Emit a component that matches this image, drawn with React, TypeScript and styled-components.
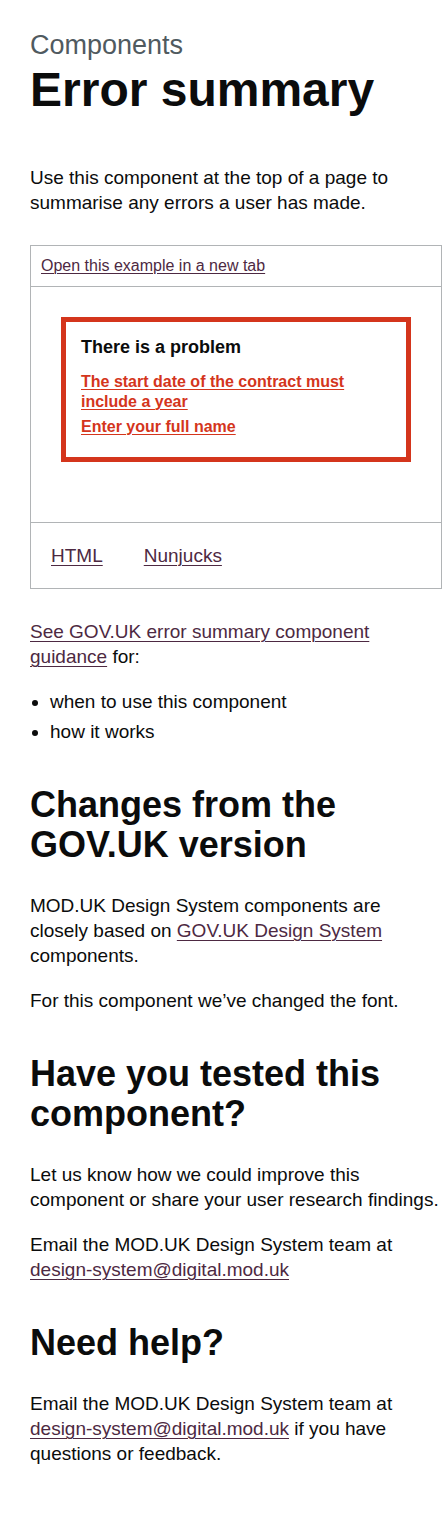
import React from "react";
import styled, { createGlobalStyle } from "styled-components";

const GlobalStyle = createGlobalStyle`
  html, body {
    margin: 0;
    padding: 0;
    background: #ffffff;
  }
  body {
    font-family: "Liberation Sans", Arial, sans-serif;
    color: #0b0c0c;
    -webkit-font-smoothing: antialiased;
  }
  * { box-sizing: border-box; }
`;

const Page = styled.main`
  width: 442px;
  padding: 30px 0 70px 30px;
`;

const Caption = styled.span`
  display: block;
  font-size: 27px;
  line-height: 30px;
  color: #505a5f;
  margin-bottom: 5px;
`;

const Title = styled.h1`
  font-size: 48px;
  line-height: 50px;
  font-weight: 700;
  margin: 0 0 50px;
`;

const Lead = styled.p`
  font-size: 19px;
  line-height: 25px;
  margin: 0 0 30px;
`;

const Body = styled.p`
  font-size: 19px;
  line-height: 25px;
  margin: 0 0 20px;
`;

const Link = styled.a`
  color: #4d2942;
  text-decoration: underline;
  text-decoration-thickness: 1px;
  text-underline-offset: 0.14em;
`;

const Example = styled.div`
  border: 1px solid #b1b4b6;
  margin-bottom: 30px;
`;

const ExampleHeader = styled.div`
  padding: 10px;
  border-bottom: 1px solid #b1b4b6;
  font-size: 16px;
  line-height: 20px;
`;

const Preview = styled.div`
  padding: 30px;
  border-bottom: 1px solid #b1b4b6;
`;

const ErrorSummary = styled.div`
  border: 5px solid #d4351c;
  padding: 15px;
  margin-bottom: 30px;
`;

const ErrorTitle = styled.h2`
  font-size: 18px;
  line-height: 20px;
  font-weight: 700;
  margin: 0 0 15px;
`;

const ErrorList = styled.ul`
  list-style: none;
  margin: 0;
  padding: 0;
`;

const ErrorItem = styled.li`
  margin-bottom: 5px;
  font-size: 16px;
  line-height: 20px;
`;

const ErrorLink = styled.a`
  color: #d4351c;
  font-weight: 700;
  text-decoration: underline;
  text-decoration-thickness: 1px;
  text-underline-offset: 0.14em;
`;

const Tabs = styled.ul`
  display: flex;
  list-style: none;
  margin: 0;
  padding: 0;
`;

const Tab = styled.li`
  padding: 20px;
  font-size: 19px;
  line-height: 25px;
  & + & {
    padding-left: 21px;
  }
`;

const BulletList = styled.ul`
  list-style: disc;
  margin: 0 0 15px;
  padding-left: 20px;
`;

const Bullet = styled.li`
  font-size: 19px;
  line-height: 25px;
  margin-bottom: 5px;
`;

const Heading = styled.h2`
  font-size: 36px;
  line-height: 40px;
  font-weight: 700;
  margin: 41px 0 28px;
`;

export default function App() {
  return (
    <>
      <GlobalStyle />
      <Page>
        <Caption>Components</Caption>
        <Title>Error summary</Title>
        <Lead>
          Use this component at the top of a page to summarise any errors a user has made.
        </Lead>

        <Example>
          <ExampleHeader>
            <Link href="#">Open this example in a new tab</Link>
          </ExampleHeader>
          <Preview>
            <ErrorSummary>
              <ErrorTitle>There is a problem</ErrorTitle>
              <ErrorList>
                <ErrorItem>
                  <ErrorLink href="#">The start date of the contract must include a year</ErrorLink>
                </ErrorItem>
                <ErrorItem>
                  <ErrorLink href="#">Enter your full name</ErrorLink>
                </ErrorItem>
              </ErrorList>
            </ErrorSummary>
          </Preview>
          <Tabs>
            <Tab>
              <Link href="#">HTML</Link>
            </Tab>
            <Tab>
              <Link href="#">Nunjucks</Link>
            </Tab>
          </Tabs>
        </Example>

        <Body>
          <Link href="#">See GOV.UK error summary component guidance</Link> for:
        </Body>
        <BulletList>
          <Bullet>when to use this component</Bullet>
          <Bullet>how it works</Bullet>
        </BulletList>

        <Heading>Changes from the GOV.UK version</Heading>
        <Body>
          MOD.UK Design System components are closely based on{" "}
          <Link href="#">GOV.UK Design System</Link> components.
        </Body>
        <Body>For this component we’ve changed the font.</Body>

        <Heading>Have you tested this component?</Heading>
        <Body>
          Let us know how we could improve this component or share your user research findings.
        </Body>
        <Body>
          Email the MOD.UK Design System team at{" "}
          <Link href="#">design-system@digital.mod.uk</Link>
        </Body>

        <Heading>Need help?</Heading>
        <Body>
          Email the MOD.UK Design System team at{" "}
          <Link href="#">design-system@digital.mod.uk</Link> if you have questions or feedback.
        </Body>
      </Page>
    </>
  );
}
